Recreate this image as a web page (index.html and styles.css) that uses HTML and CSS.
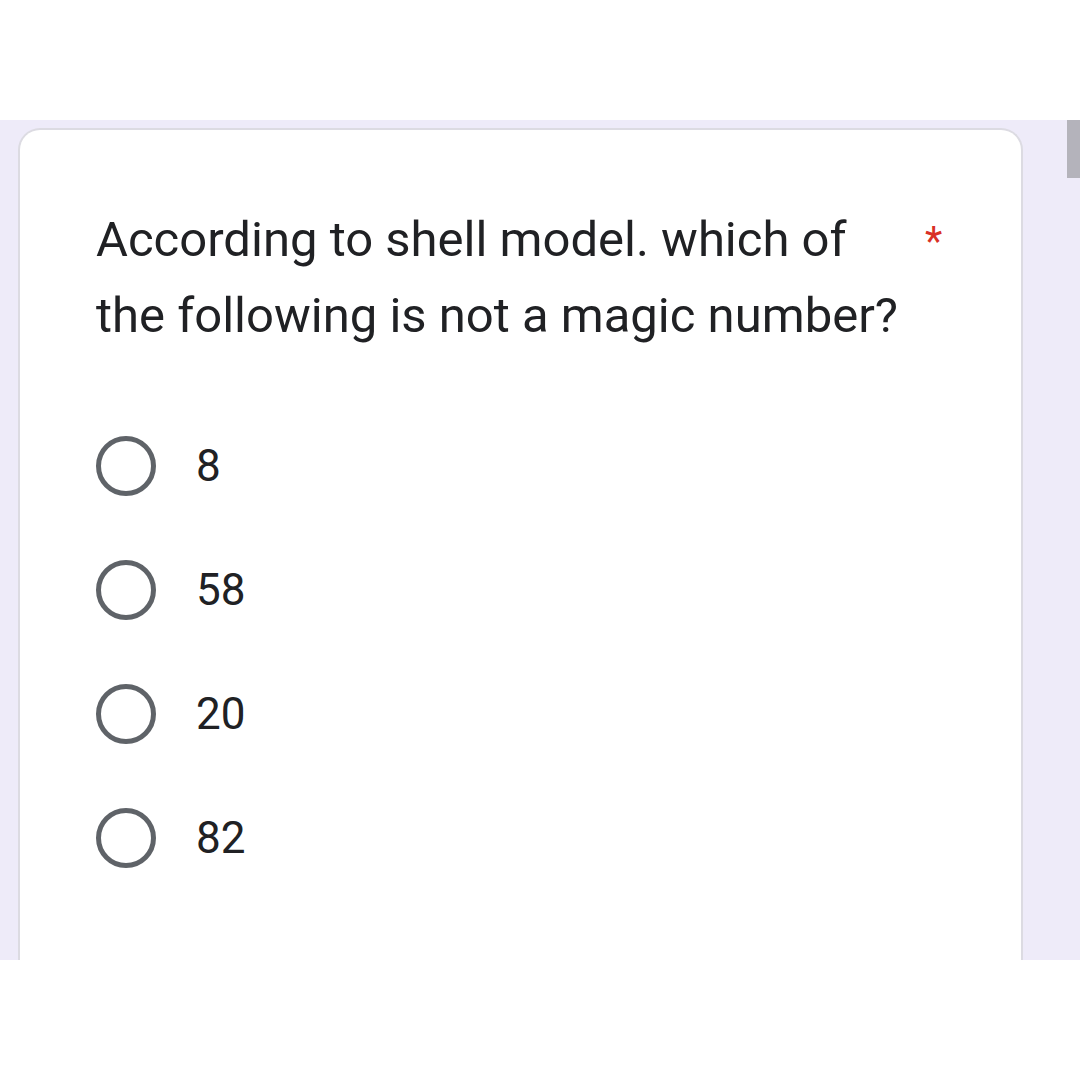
FILE: index.html
```html
<!DOCTYPE html>
<html>
<head>
<meta charset="utf-8">
<link rel="stylesheet" href="styles.css">
</head>
<body>
<div class="top"></div>
<div class="band">
  <div class="scrollbar"></div>
  <div class="card">
    <div class="question">
      <div class="qtext">According to shell model. which of the following is not a magic number?</div>
      <div class="req">*</div>
    </div>
    <div class="options">
      <div class="option"><span class="radio"></span><span class="label">8</span></div>
      <div class="option"><span class="radio"></span><span class="label">58</span></div>
      <div class="option"><span class="radio"></span><span class="label">20</span></div>
      <div class="option"><span class="radio"></span><span class="label">82</span></div>
    </div>
  </div>
</div>
</body>
</html>
```
FILE: styles.css
```css
html, body {
  margin: 0;
  padding: 0;
  background: #ffffff;
  width: 1080px;
  height: 1080px;
  overflow: hidden;
  font-family: Roboto, "Liberation Sans", sans-serif;
}
.top {
  height: 120px;
  background: #ffffff;
}
.band {
  position: relative;
  height: 840px;
  background: #eeebf9;
  padding-top: 8px;
  box-sizing: border-box;
  display: flex;
}
.scrollbar {
  position: absolute;
  right: 0;
  top: 0;
  width: 13px;
  height: 58px;
  background: #b4b3bb;
}
.card {
  margin-left: 18px;
  width: 1005px;
  box-sizing: border-box;
  background: #ffffff;
  border: 2px solid #dcdbe2;
  border-bottom: none;
  border-radius: 22px 22px 0 0;
  padding: 72px 0 0 76px;
}
.question {
  display: flex;
  align-items: flex-start;
}
.qtext {
  width: 820px;
  font-size: 49px;
  line-height: 76px;
  color: #202124;
}
.req {
  margin-left: 9px;
  font-size: 40px;
  line-height: 80px;
  color: #d93025;
}
.options {
  margin-top: 82px;
  display: flex;
  flex-direction: column;
  gap: 64px;
}
.option {
  display: flex;
  align-items: center;
  height: 60px;
}
.radio {
  width: 60px;
  height: 60px;
  box-sizing: border-box;
  border: 5px solid #5f6368;
  border-radius: 50%;
}
.label {
  margin-left: 40px;
  font-size: 44px;
  color: #202124;
}
```
